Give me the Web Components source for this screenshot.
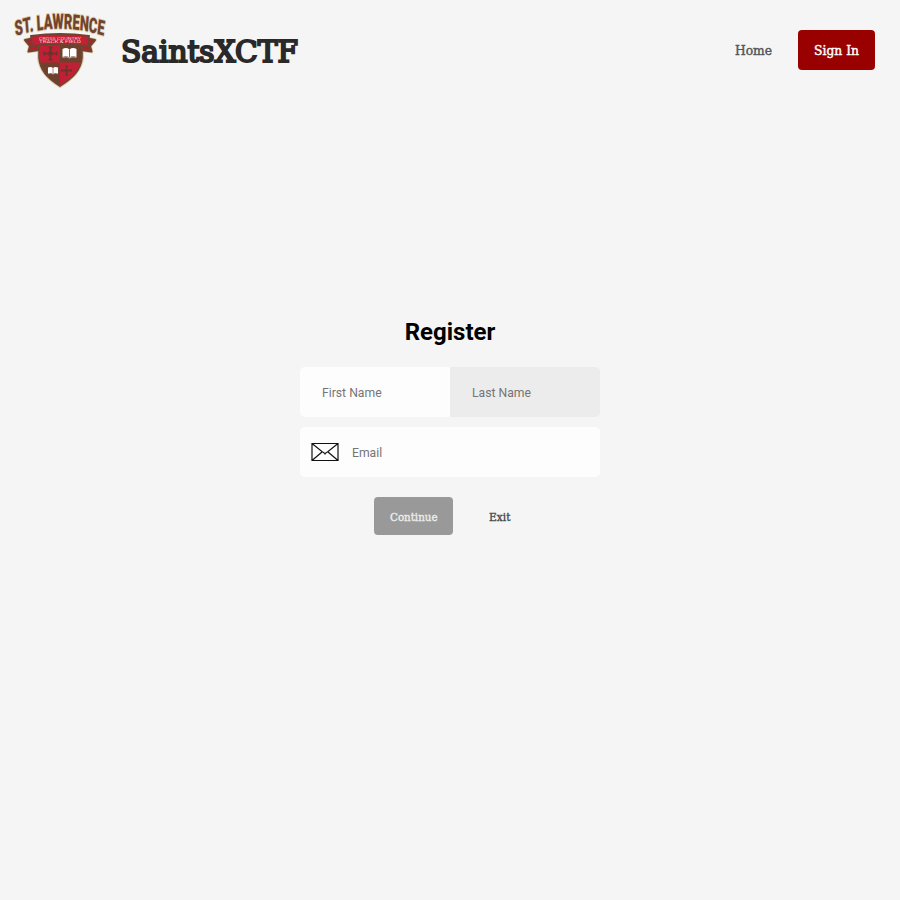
<!DOCTYPE html>
<html lang="en"><head><meta charset="utf-8"><title>SaintsXCTF</title>
<style>body{margin:0;background:#f5f5f5;font-family:Roboto,sans-serif;height:900px;overflow:hidden}</style></head>
<body><register-page></register-page>
<script>
const define=(name,html)=>customElements.define(name,class extends HTMLElement{
  constructor(){super();this.attachShadow({mode:'open'}).innerHTML=html;}
});

// Slab lettering set to an exact advance width; the stroke evens out thick and thin stems.
customElements.define('slab-text',class extends HTMLElement{
  connectedCallback(){
    const w=this.getAttribute('width'),s=this.getAttribute('size'),h=Math.ceil(s*1.3);
    const root=this.attachShadow({mode:'open'});
    root.innerHTML=`<style>:host{display:block;line-height:0}svg{display:block;overflow:visible}
    text{font-family:"Roboto Slab","DejaVu Serif",serif;font-size:${s}px;font-weight:400;fill:currentColor;stroke:currentColor;stroke-width:${this.getAttribute('stroke')||0}}</style>
    <svg width="${w}" height="${h}"><text x="0" y="${Math.round(s)}" textLength="${w}" lengthAdjust="spacingAndGlyphs"></text></svg>`;
    root.querySelector('text').textContent=this.getAttribute('label');
  }
});

define('saints-logo',`<style>:host{display:block;width:120px;height:100px}svg{display:block}
text{font-family:Roboto,sans-serif;font-weight:900}</style>
<svg width="120" height="100" viewBox="0 0 120 100">
<defs><path id="arch" d="M26 36Q100 21.500 174 36"/>
<clipPath id="shield"><path d="M39 43H82V58C81 70 73 78 60 86C47 78 40 70 39 58Z"/></clipPath>
<g id="cross"><path d="M0-7V7M-7 0H7" stroke-width="1.700"/><path d="M-2-6H2M-2 6H2M-6-2V2M6-2V2M-2-2L2 2M2-2L-2 2" stroke-width="1.400"/></g>
<g id="book"><path d="M-7-4Q-3-6 0-3.500Q3-6 7-4V4Q3 2.500 0 4.500Q-3 2.500-7 4Z" fill="#fff"/><path d="M0-3.500V4" stroke="#70402f" stroke-width=".8"/><path d="M-7 4.500Q-3 3 0 5Q3 3 7 4.500" fill="none" stroke="#d9c9bf" stroke-width=".7"/></g></defs>
<g stroke-linejoin="round"><path d="M25 40L35 38L39 50L28.500 51.500L30 46ZM95 40L85 38L81 50L91.500 51.500L90 46Z" fill="none" stroke="#e2cdac" stroke-width="3.600"/>
<path d="M38.500 43V58C39.500 70 47 78.500 60 86.500C73 78.500 81.500 70 82.500 58V43" fill="none" stroke="#e2cdac" stroke-width="3"/>
<path d="M25 40L35 38L39 50L28.500 51.500L30 46ZM95 40L85 38L81 50L91.500 51.500L90 46Z" fill="#b51e32" stroke="#70432f" stroke-width="2"/></g>
<g clip-path="url(#shield)"><path fill="#c02036" d="M37 40H85V90H37Z"/><path fill="#70402f" d="M60 40H85V62.500H60ZM37 62.500H60V90H37Z"/></g>
<path d="M39 43V58C40 70 47 78 60 86C73 78 81 70 82 58V43" fill="none" stroke="#70462f" stroke-width="1.600"/>
<g fill="none" stroke="#69352b"><use href="#cross" x="50.500" y="53.500"/><use href="#cross" transform="translate(66.500 70.500) scale(.75)"/></g>
<use href="#book" x="69.500" y="53"/><use href="#book" transform="translate(53 70.500) scale(.72)"/>
<path d="M31 36Q60 32 89 36L88 46Q60 42.500 32 46Z" fill="#c51f35" stroke="#70432f" stroke-width="1.800"/>
<g fill="#f0ccc9" transform="translate(39 0) scale(1 .6)" font-size="4.800"><text style="font-weight:400" x="0" y="66" textLength="42" lengthAdjust="spacingAndGlyphs">CROSS COUNTRY</text><text style="font-weight:400" x="0" y="72" textLength="42" lengthAdjust="spacingAndGlyphs">TRACK &amp; FIELD</text></g>
<g transform="scale(.6 1)"><text font-size="21" fill="#70432f" stroke="#e2cdac" stroke-width="2" paint-order="stroke" stroke-linejoin="round" textLength="148" lengthAdjust="spacingAndGlyphs"><textPath href="#arch" textLength="148" lengthAdjust="spacingAndGlyphs">ST. LAWRENCE</textPath></text></g>
</svg>`);

define('nav-bar',`<style>:host{display:flex;height:100px;align-items:center;color:#292929;padding-right:25px}
.title{margin:2px 0 0 1px}.home{margin-left:auto;color:#555}.sign{margin-left:26px;background:#900;color:#fff;border-radius:4px;width:77px;height:40px;display:grid;place-items:center}
</style><saints-logo></saints-logo><slab-text class="title" label="SaintsXCTF" width="177" size="30.500" stroke="2.100"></slab-text>
<slab-text class="home" label="Home" width="37" size="12.800" stroke=".45"></slab-text><div class="sign"><slab-text label="Sign In" width="45" size="12.800" stroke=".45"></slab-text></div>`);

define('form-field',`<style>:host{display:flex;align-items:center;box-sizing:border-box;height:50px;padding-left:22px;background:#fdfdfd;color:#757575;font-size:12.2px;line-height:14px}::slotted(svg){margin-right:13px;flex:none}span{margin-top:2px}</style><slot name="icon"></slot><span><slot></slot></span>`);

define('form-button',`<style>:host{display:grid;place-items:center;height:38px;border-radius:4px;box-sizing:border-box;padding-top:2px}</style><slot></slot>`);

define('register-page',`<style>:host{display:block}
main{width:300px;padding-top:216px;margin:0 auto}h1{font:700 24px/32px Roboto,sans-serif;text-align:center;margin:0 0 19px;color:#000}
.names{display:grid;grid-template-columns:1fr 1fr;border-radius:5px;overflow:hidden;margin-bottom:10px}.last{background:#ececec}
.email{border-radius:5px;padding-left:11px}
.actions{display:flex;margin:20px 0 0 74px}.continue{width:79px;background:#999;color:#ececec}.exit{width:93px;color:#444}
</style><nav-bar></nav-bar><main><h1>Register</h1><div class="names"><form-field>First Name</form-field><form-field class="last">Last Name</form-field></div>
<form-field class="email"><svg slot="icon" width="28" height="20" viewBox="0 0 28 20" fill="none" stroke="#111" stroke-width="1.200"><path d="M1 1.500H27V18.500H1ZM1 1.500L11.500 10Q12.700 10 14 12Q15.300 10 16.500 10L27 1.500M1 18.500L11 10M27 18.500L17 10"/></svg>Email</form-field>
<div class="actions"><form-button class="continue"><slab-text label="Continue" width="47.500" size="11" stroke=".4"></slab-text></form-button><form-button class="exit"><slab-text label="Exit" width="21.500" size="11" stroke=".3"></slab-text></form-button></div></main>`);
</script></body></html>
